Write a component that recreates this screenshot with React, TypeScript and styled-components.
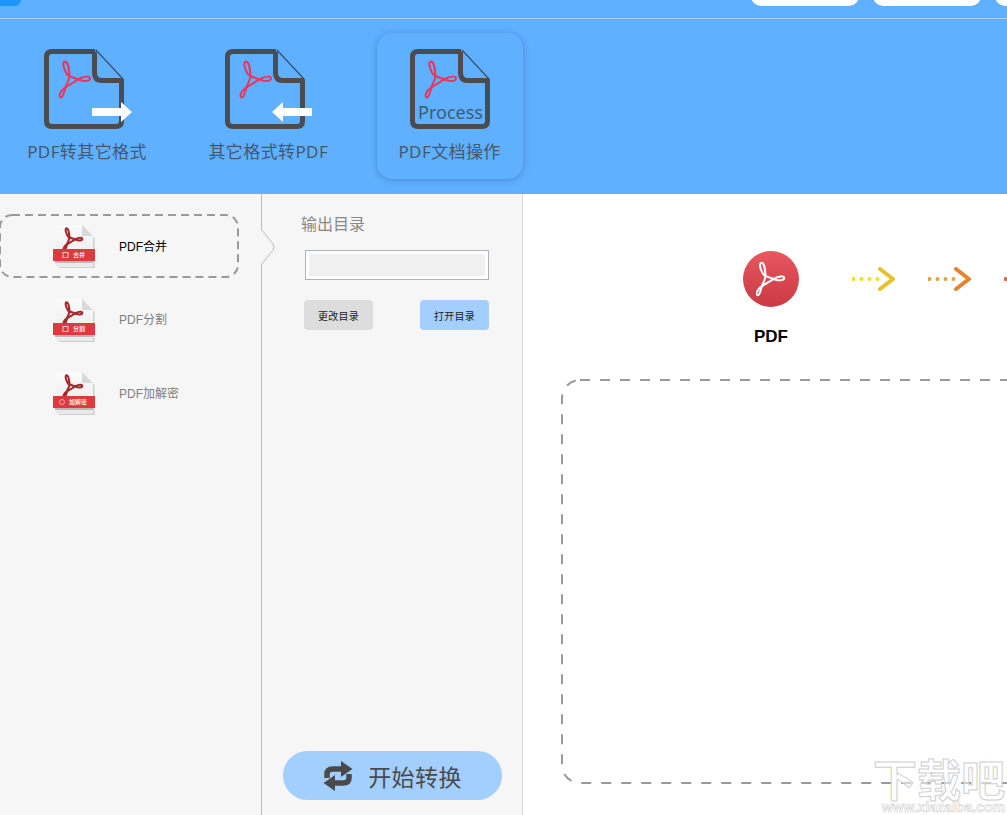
import styled, { createGlobalStyle } from "styled-components";

const CJK = `"Noto Sans", "Noto Sans CJK SC", sans-serif`;
const ARIAL_CJK = `"Liberation Sans", "Noto Sans CJK SC", sans-serif`;

const ACROBAT =
  "M21 12.5C18 13 19.5 19 22 23.5C23 25.5 24 26.5 25 27L36 31C40 32.5 46 32.5 46 29.5C46 26.5 40 27.5 36 29.5L22 38C20 41 19.5 48.5 17 48.5C14 48 16 42 21 38.5C23 35 25 31 25.5 27C25 20 24.5 13 21 12.5Z";

const tabs = [
  { label: "PDF转其它格式", icon: "out" },
  { label: "其它格式转PDF", icon: "in" },
  { label: "PDF文档操作", icon: "process", active: true },
] as const;

const tools = [
  { label: "PDF合并", band: "合并", bandX: 26, markX: 12.5, active: true },
  { label: "PDF分割", band: "分割", bandX: 26, markX: 12.5 },
  { label: "PDF加解密", band: "加解密", bandX: 25, markX: 9, round: true },
];

const TabIcon = ({ kind }: { kind: "out" | "in" | "process" }) => (
  <svg width="90" height="80" viewBox="0 0 90 80" style={{ overflow: "visible" }}>
    <path d="M52 1L79 30" stroke="#35506b" strokeWidth="1.2" fill="none" />
    <path
      d="M51 2.5H8Q2.5 2.5 2.5 8V72Q2.5 77.5 8 77.5H72Q77.5 77.5 77.5 72V31.5H58Q50.5 31.5 50.5 24V2.5"
      stroke="#4a4c50"
      strokeWidth="5"
      fill="none"
      strokeLinejoin="round"
    />
    <path d={ACROBAT} stroke="#e8365d" strokeWidth="2" fill="none" />
    {kind === "out" && <path d="M48 59H77V53L88 63L77 73V67H48Z" fill="#fff" />}
    {kind === "in" && <path d="M87 59H58V53L47 63L58 73V67H87Z" fill="#fff" />}
    {kind === "process" && (
      <text x="40.5" y="69.5" textAnchor="middle" fontSize="18" fontFamily="Noto Sans" fill="#3d5a7a">
        Process
      </text>
    )}
  </svg>
);

const ToolIcon = ({
  band,
  bandX,
  markX,
  round,
}: {
  band: string;
  bandX: number;
  markX: number;
  round?: boolean;
}) => (
  <svg width="42" height="44" viewBox="0 0 42 44">
    <defs>
      <linearGradient id="page" x1="0" y1="0" x2="0" y2="1">
        <stop offset="0" stopColor="#fbfbfb" />
        <stop offset="1" stopColor="#e9e9e9" />
      </linearGradient>
    </defs>
    <path d="M5 3H30L41.5 14V44H6Z" fill="#a8a8a8" opacity="0.5" />
    <path d="M2.5 1H29L40 12V43H6Q2.5 43 2.5 40Z" fill="url(#page)" />
    <path d="M29 1L40 12H29Z" fill="#d9d9d9" />
    <g transform="translate(0.7 -3.4) scale(0.62)">
      <path d={ACROBAT} stroke="#a9272f" strokeWidth="3.4" fill="none" />
    </g>
    <rect x="2" y="37" width="38" height="2" fill="#9a9a9a" opacity="0.6" />
    <rect x="0" y="25" width="42" height="12" fill="#dc3a3f" />
    {round ? (
      <circle cx={markX} cy="31" r="2.5" fill="none" stroke="#f4c4c4" strokeWidth="0.8" />
    ) : (
      <rect x={markX - 2.5} y="28.5" width="5" height="5" fill="none" stroke="#f4c4c4" strokeWidth="1" />
    )}
    <text
      x={bandX}
      y="33.2"
      textAnchor="middle"
      fontSize="6"
      fontWeight="700"
      fontFamily="Noto Sans CJK SC"
      fill="#fbe3e3"
    >
      {band}
    </text>
  </svg>
);

const FlowArrow = ({ dot, head }: { dot: string; head: string }) => (
  <svg width="43" height="24" viewBox="0 0 43 24">
    {[1.5, 9.5, 17.5, 25.5].map((x) => (
      <circle key={x} cx={x} cy="12" r="2" fill={dot} />
    ))}
    <path
      d="M28 2L41 12L28 22"
      stroke={head}
      strokeWidth="4"
      strokeLinecap="round"
      strokeLinejoin="round"
      fill="none"
    />
  </svg>
);

const DashedFrame = ({ dash, radius }: { dash: string; radius: number }) => (
  <FrameSvg width="100%" height="100%">
    <rect
      width="100%"
      height="100%"
      rx={radius}
      fill="none"
      stroke="#9a9a9a"
      strokeWidth="2"
      strokeDasharray={dash}
    />
  </FrameSvg>
);

const App = () => (
  <>
    <GlobalStyle />
    <Page>
      <Header>
        <TopBar>
          <AppMark />
          <WindowPills>
            <Pill />
            <Pill />
            <Pill />
          </WindowPills>
        </TopBar>
        <TabRow>
          {tabs.map((t) => (
            <Tab key={t.label} $active={"active" in t}>
              <TabIcon kind={t.icon} />
              <TabLabel>{t.label}</TabLabel>
            </Tab>
          ))}
        </TabRow>
      </Header>

      <Body>
        <ToolList>
          {tools.map((t) => (
            <ToolItem key={t.label}>
              {t.active && <DashedFrame dash="8 5" radius={12} />}
              <ToolIcon band={t.band} bandX={t.bandX} markX={t.markX} round={t.round} />
              <ToolLabel $active={!!t.active}>{t.label}</ToolLabel>
            </ToolItem>
          ))}
        </ToolList>

        <Settings>
          <Notch width="15" height="38" viewBox="0 0 15 38">
            <path
              d="M0 1L12 16Q14 19 12 22L0 37"
              fill="#f6f6f6"
              stroke="#bcbcbc"
              strokeWidth="1"
            />
          </Notch>
          <SettingsTitle>输出目录</SettingsTitle>
          <PathBox>
            <PathInner />
          </PathBox>
          <ButtonRow>
            <SmallButton>更改目录</SmallButton>
            <SmallButton $primary>打开目录</SmallButton>
          </ButtonRow>
          <StartButton>
            <svg width="30" height="30" viewBox="0 0 30 30">
              <path d="M4 17V13Q4 8 10 8H20" stroke="#4a4a4a" strokeWidth="5.5" fill="none" />
              <path d="M18 0L29.5 8L18 16Z" fill="#4a4a4a" />
              <path d="M26 13V17Q26 22 20 22H10" stroke="#4a4a4a" strokeWidth="5.5" fill="none" />
              <path d="M12 14L0.5 22L12 30Z" fill="#4a4a4a" />
            </svg>
            开始转换
          </StartButton>
        </Settings>

        <Preview>
          <FlowRow>
            <Format>
              <FormatBadge>
                <svg width="30" height="36" viewBox="15 11 33 39">
                  <path d={ACROBAT} stroke="#fff" strokeWidth="2.2" fill="none" />
                </svg>
              </FormatBadge>
              <FormatName>PDF</FormatName>
            </Format>
            <Arrows>
              <FlowArrow dot="#f0e020" head="#e8c22a" />
              <FlowArrow dot="#e0a63a" head="#e5842e" />
              <FlowArrow dot="#e2603a" head="#e04a3a" />
            </Arrows>
          </FlowRow>
          <DropArea>
            <DashedFrame dash="10 10" radius={18} />
          </DropArea>
        </Preview>
      </Body>

      <Watermark>
        <WatermarkName>下载吧</WatermarkName>
        <WatermarkUrl>www.xiazaiba.com</WatermarkUrl>
      </Watermark>
    </Page>
  </>
);

const GlobalStyle = createGlobalStyle`
  html, body {
    margin: 0;
    padding: 0;
    background: #fff;
    overflow: hidden;
  }
`;

const Page = styled.div`
  position: relative;
  width: 1007px;
  height: 815px;
  display: flex;
  flex-direction: column;
  overflow: hidden;
`;

const Header = styled.div`
  height: 194px;
  flex-shrink: 0;
  background: #5fb0ff;
`;

const TopBar = styled.div`
  height: 18px;
  box-sizing: content-box;
  display: flex;
  align-items: flex-start;
  justify-content: space-between;
  border-bottom: 1px solid #a9cff6;
  overflow: hidden;
`;

const AppMark = styled.div`
  width: 21px;
  height: 6px;
  background: #1f96ff;
  border-radius: 0 0 6px 0;
`;

const WindowPills = styled.div`
  display: flex;
  gap: 14px;
  margin-right: -96px;
  margin-top: -14px;
`;

const Pill = styled.div`
  width: 108px;
  height: 20px;
  background: #fff;
  border-radius: 10px;
`;

const TabRow = styled.div`
  display: flex;
  gap: 35.3px;
  padding: 14px 0 0 14px;
`;

const Tab = styled.div<{ $active?: boolean }>`
  width: 146px;
  height: 146px;
  box-sizing: border-box;
  padding-top: 16px;
  display: flex;
  flex-direction: column;
  align-items: center;
  border-radius: 15px;
  ${({ $active }) =>
    $active
      ? `background: #5fb0ff; box-shadow: 0 1px 6px rgba(40, 90, 150, 0.45);`
      : ""}

  svg {
    margin-left: ${({ $active }) => ($active ? "10px" : "4px")};
  }
`;

const TabLabel = styled.div`
  margin-top: 10px;
  font-family: ${CJK};
  font-size: 17px;
  line-height: 26px;
  letter-spacing: 0.4px;
  color: #44586e;
  white-space: nowrap;
`;

const Body = styled.div`
  flex: 1;
  display: flex;
  min-height: 0;
`;

const ToolList = styled.div`
  width: 262px;
  box-sizing: border-box;
  flex-shrink: 0;
  background: #f6f6f6;
  border-right: 1px solid #bcbcbc;
  padding-top: 21px;
  display: flex;
  flex-direction: column;
  gap: 11.5px;
`;

const ToolItem = styled.div`
  position: relative;
  width: 238px;
  height: 62px;
  box-sizing: border-box;
  padding-left: 53px;
  display: flex;
  align-items: center;
  gap: 24px;
`;

const FrameSvg = styled.svg`
  position: absolute;
  left: 0;
  top: 0;
  overflow: visible;
`;

const ToolLabel = styled.span<{ $active: boolean }>`
  margin-bottom: 2px;
  font-family: ${ARIAL_CJK};
  font-size: 12px;
  color: ${({ $active }) => ($active ? "#000" : "#808080")};
`;

const Settings = styled.div`
  position: relative;
  width: 261px;
  flex-shrink: 0;
  box-sizing: border-box;
  background: #f6f6f6;
  border-right: 1px solid #d8d8d8;
  padding: 20px 33px 15px 39px;
  display: flex;
  flex-direction: column;
`;

const Notch = styled.svg`
  position: absolute;
  left: -1px;
  top: 34px;
`;

const SettingsTitle = styled.div`
  font-family: ${ARIAL_CJK};
  font-size: 16px;
  line-height: 22px;
  color: #888;
`;

const PathBox = styled.div`
  width: 184px;
  height: 30px;
  box-sizing: border-box;
  margin: 14px 0 0 4px;
  padding: 3px;
  background: #fff;
  border: 1px solid #aab4bc;
`;

const PathInner = styled.div`
  height: 100%;
  background: #f0f0f0;
`;

const ButtonRow = styled.div`
  display: flex;
  justify-content: space-between;
  width: 185px;
  margin: 20px 0 0 3px;
`;

const SmallButton = styled.div<{ $primary?: boolean }>`
  width: 69px;
  height: 30px;
  display: flex;
  align-items: center;
  justify-content: center;
  border-radius: 4px;
  background: ${({ $primary }) => ($primary ? "#a3cfff" : "#dddddd")};
  font-family: ${ARIAL_CJK};
  font-size: 10px;
  letter-spacing: 0.2px;
  color: #222;
`;

const StartButton = styled.div`
  width: 219px;
  height: 49px;
  margin: auto 0 0 -18px;
  display: flex;
  align-items: center;
  justify-content: center;
  gap: 15px;
  border-radius: 25px;
  background: #a3cfff;
  font-family: ${CJK};
  font-size: 23px;
  letter-spacing: 0.4px;
  color: #4a4a4a;
`;

const Preview = styled.div`
  flex: 1;
  min-width: 0;
  background: #fff;
  padding: 57px 0 0 39px;
  display: flex;
  flex-direction: column;
`;

const FlowRow = styled.div`
  display: flex;
  align-items: flex-start;
  padding-left: 181px;
  height: 129px;
`;

const Format = styled.div`
  width: 56px;
  display: flex;
  flex-direction: column;
  align-items: center;
`;

const FormatBadge = styled.div`
  width: 56px;
  height: 56px;
  border-radius: 50%;
  display: flex;
  align-items: center;
  justify-content: center;
  background: linear-gradient(#e9575f, #c93a44);
`;

const FormatName = styled.div`
  margin-top: 21px;
  font-family: "Liberation Sans", sans-serif;
  font-weight: 700;
  font-size: 17px;
  line-height: 18px;
  color: #000;
`;

const Arrows = styled.div`
  display: flex;
  gap: 33px;
  margin: 16px 0 0 53px;
  flex-shrink: 0;
`;

const DropArea = styled.div`
  position: relative;
  width: 500px;
  height: 403px;
`;

const Watermark = styled.div`
  position: absolute;
  right: 2px;
  bottom: 2px;
  display: flex;
  flex-direction: column;
  align-items: flex-end;
`;

const WatermarkName = styled.div`
  font-family: "Noto Sans CJK SC", sans-serif;
  font-weight: 700;
  font-size: 44px;
  line-height: 45px;
  color: rgba(255, 255, 255, 0.55);
  -webkit-text-stroke: 1px #cfcfcf;
  white-space: nowrap;
`;

const WatermarkUrl = styled.div`
  font-family: "Liberation Sans", sans-serif;
  font-weight: 700;
  font-size: 14px;
  line-height: 12px;
  color: #fff;
  -webkit-text-stroke: 0.6px #cfcfcf;
`;

export default App;
